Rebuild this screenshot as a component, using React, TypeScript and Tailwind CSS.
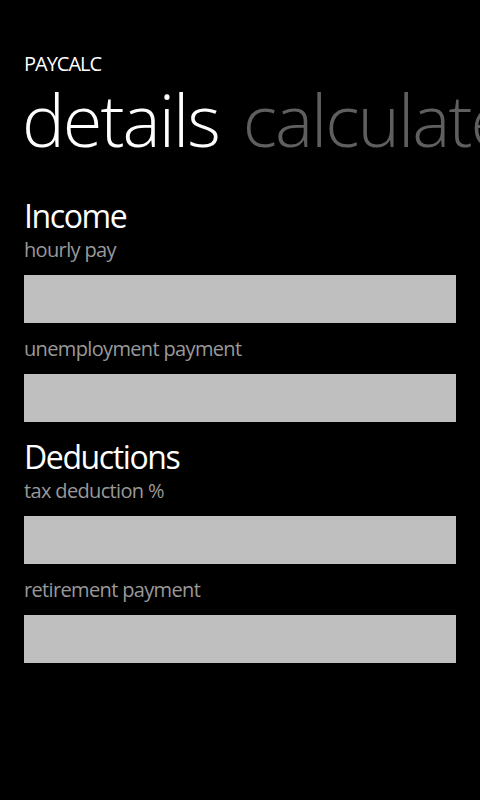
// Pivot page for the pay calculator: app title, pivot headers and the
// "details" pane with its two groups of text boxes.

const font = "font-['Open_Sans','Noto_Sans',sans-serif]";

type Field = { label: string };
type Group = { title: string; fields: Field[] };

const groups: Group[] = [
  { title: 'Income', fields: [{ label: 'hourly pay' }, { label: 'unemployment payment' }] },
  { title: 'Deductions', fields: [{ label: 'tax deduction %' }, { label: 'retirement payment' }] },
];

function TextBoxField({ field }: { field: Field }) {
  return (
    <div>
      <div className="text-[20px] leading-[20px] tracking-[-0.65px] text-[#999999]">{field.label}</div>
      <div className="mt-[15px] h-12 bg-[#bfbfbf]" />
    </div>
  );
}

function FieldGroup({ group }: { group: Group }) {
  return (
    <section>
      <h2 className="text-[32px] leading-[32px] font-normal tracking-[-1.4px] text-white">{group.title}</h2>
      <div className="mt-2 flex flex-col gap-4">
        {group.fields.map((field) => (
          <TextBoxField key={field.label} field={field} />
        ))}
      </div>
    </section>
  );
}

export default function App() {
  return (
    <div className={`h-[800px] w-[480px] overflow-hidden bg-black text-white ${font}`}>
      <header className="pt-[52px]">
        <div className="px-6 text-[20px] leading-[24px] tracking-[-1px]">PAYCALC</div>
        <div className="flex gap-6 whitespace-nowrap pl-[22px] text-[72px] leading-[86px] font-light tracking-[-2px]">
          <span className="text-white">details</span>
          <span className="text-[#5f5f5f]">calculate</span>
        </div>
      </header>
      <main className="mt-[38px] flex flex-col gap-[19px] px-6">
        {groups.map((group) => (
          <FieldGroup key={group.title} group={group} />
        ))}
      </main>
    </div>
  );
}
